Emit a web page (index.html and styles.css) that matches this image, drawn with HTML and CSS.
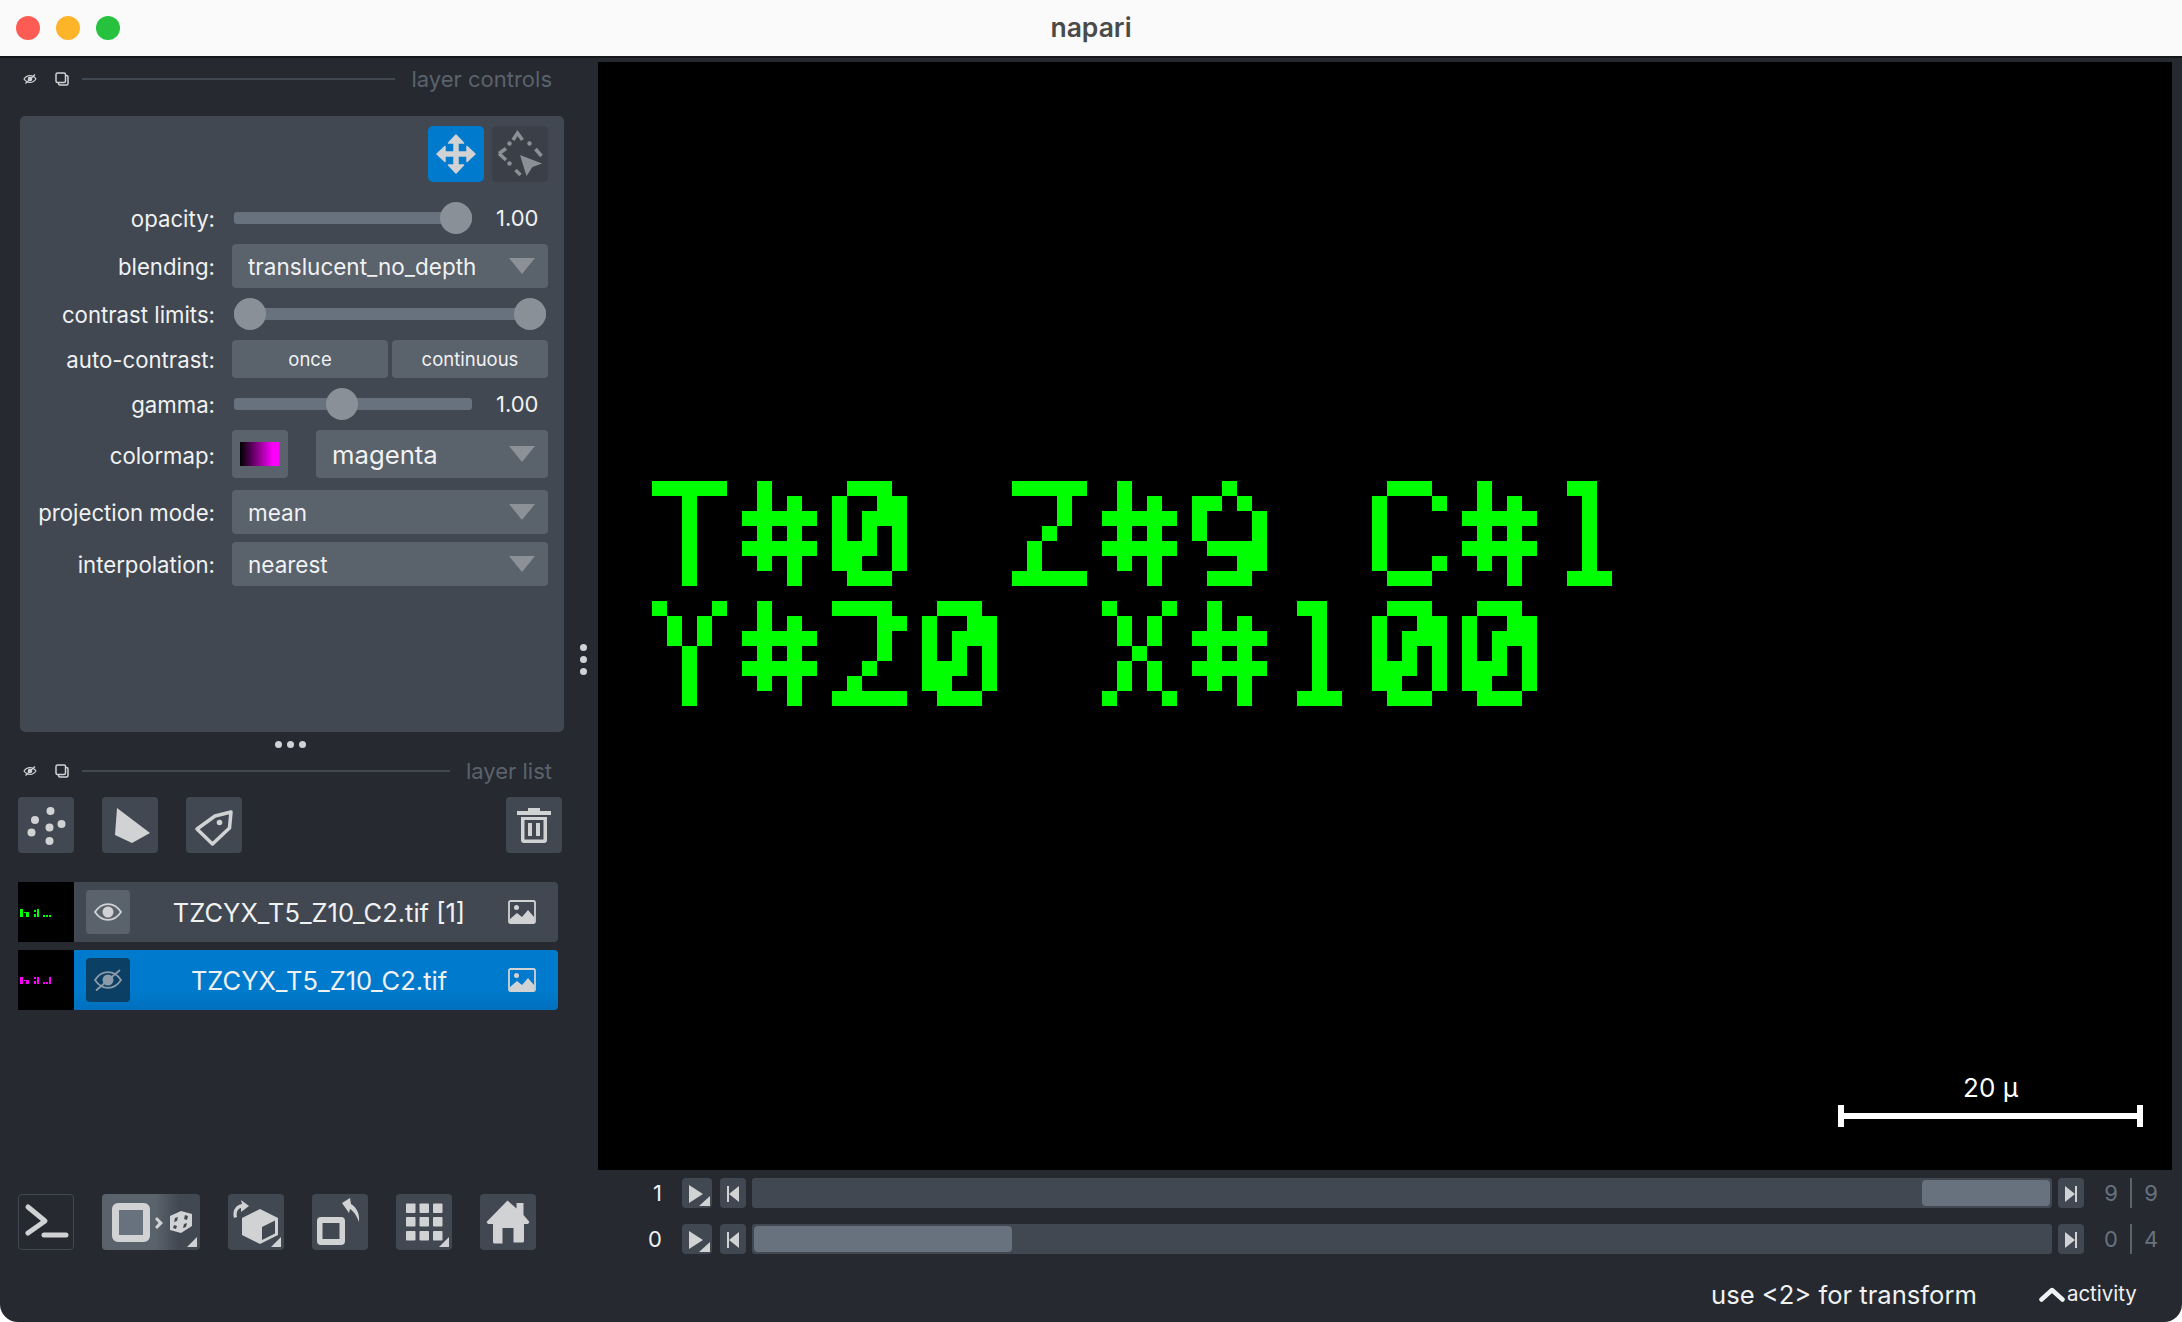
FILE: index.html
```html
<!DOCTYPE html>
<html lang="en">

<head>
    <meta charset="UTF-8">
    <title>napari</title>
    <link rel="stylesheet" href="styles.css">
</head>

<body>
    <svg class="defs" width="0" height="0">
        <filter id="pixelate" x="0" y="0" width="100%" height="100%" color-interpolation-filters="sRGB">
            <feFlood x="7" y="7" width="1" height="1" flood-color="#000"/>
            <feComposite width="15" height="15"/>
            <feTile result="grid"/>
            <feComposite in="SourceGraphic" in2="grid" operator="in"/>
            <feMorphology operator="dilate" radius="7"/>
            <feComponentTransfer>
                <feFuncA type="discrete" tableValues="0 1"/>
            </feComponentTransfer>
        </filter>
        <symbol id="eye-off" viewBox="0 0 14 10">
            <path d="M1 5c3-4.500 9-4.500 12 0-3 4.500-9 4.500-12 0z" fill="none" stroke="#d1d2d4" stroke-width="1.200"/>
            <circle cx="7" cy="5" r="2.300" fill="#d1d2d4"/>
            <path d="M2.500 9.500 12 .5" stroke="#d1d2d4" stroke-width="1.200"/>
        </symbol>
        <symbol id="float" viewBox="0 0 14 14">
            <rect x="3.500" y="3.500" width="9.500" height="9.500" rx="1.500" fill="#262930" stroke="#d1d2d4" stroke-width="1.500"/>
            <rect x="1" y="1" width="9.500" height="9.500" rx="1.500" fill="#262930" stroke="#d1d2d4" stroke-width="1.500"/>
        </symbol>
        <symbol id="arrow" viewBox="0 0 26 16">
            <path d="M0 0h26L13 16z" fill="#8c9198"/>
        </symbol>
        <symbol id="image" viewBox="0 0 28 24">
            <rect x="1" y="1" width="26" height="22" rx="1.500" fill="none" stroke="#d1d2d4" stroke-width="1.800"/>
            <circle cx="8.500" cy="7.500" r="2.500" fill="#d1d2d4"/>
            <path d="M2 23v-4l7-6 5 4 6-7 6 7v6z" fill="#d1d2d4"/>
        </symbol>
        <symbol id="corner" viewBox="0 0 10 10">
            <path d="M10 0v10H0z" fill="#d1d2d4"/>
        </symbol>
    </svg>

    <div class="titlebar">
        <div class="traffic">
            <span class="light red"></span>
            <span class="light yellow"></span>
            <span class="light green"></span>
        </div>
        <div class="title">napari</div>
    </div>

    <div class="window">
        <div class="sidebar">
            <div class="dock-title first">
                <svg class="dock-eye"><use href="#eye-off"/></svg>
                <svg class="dock-float"><use href="#float"/></svg>
                <div class="dock-line"></div>
                <span>layer controls</span>
            </div>

            <div class="controls">
                <div class="mode-buttons">
                    <div class="mode-btn active">
                        <svg width="40" height="40" viewBox="0 0 40 40" fill="#d1d2d4" stroke="#d1d2d4" stroke-width="1.500" stroke-linejoin="round">
                            <path d="M20 1l7.500 8h-5.500v9h9v-5.500l8 7.500-8 7.500V22h-9v9h5.500L20 39l-7.500-8H18v-9H9v5.500L1 20l8-7.500V18h9V9h-5.500z"/>
                        </svg>
                    </div>
                    <div class="mode-btn dark">
                        <svg width="56" height="56" viewBox="0 0 56 56" fill="#8c8f95">
                            <path d="M21 14l4.500-7 5 7M7 27.500l7-5M7 27.500l7 6.500M43.500 23l6 7M23.500 44l5 5" fill="none" stroke="#8c8f95" stroke-width="3.500"/>
                            <circle cx="37.500" cy="17.500" r="2.200"/><circle cx="17.500" cy="17.500" r="2.200"/>
                            <circle cx="17.500" cy="37.500" r="2.200"/>
                            <path d="M28 29l22 8.500-9.500 3.500-6 9z"/>
                        </svg>
                    </div>
                </div>

                <div class="row row-opacity">
                    <label>opacity:</label>
                    <div class="slider">
                        <div class="track"></div>
                        <div class="handle handle-opacity"></div>
                    </div>
                    <div class="value">1.00</div>
                </div>

                <div class="row">
                    <label>blending:</label>
                    <div class="combo">
                        <span class="combo-text clip">translucent_no_depth</span>
                        <svg class="combo-arrow"><use href="#arrow"/></svg>
                    </div>
                </div>

                <div class="row row-slider">
                    <label>contrast limits:</label>
                    <div class="slider wide">
                        <div class="track"></div>
                        <div class="handle handle-min"></div>
                        <div class="handle handle-max"></div>
                    </div>
                </div>

                <div class="row">
                    <label>auto-contrast:</label>
                    <div class="auto-buttons">
                        <div class="auto-btn">once</div>
                        <div class="auto-btn">continuous</div>
                    </div>
                </div>

                <div class="row row-slider">
                    <label>gamma:</label>
                    <div class="slider">
                        <div class="track"></div>
                        <div class="handle handle-gamma"></div>
                    </div>
                    <div class="value">1.00</div>
                </div>

                <div class="row row-colormap">
                    <label>colormap:</label>
                    <div class="swatch-btn"><div class="swatch"></div></div>
                    <div class="combo combo-big">
                        <span class="combo-text">magenta</span>
                        <svg class="combo-arrow"><use href="#arrow"/></svg>
                    </div>
                </div>

                <div class="row row-projection">
                    <label>projection mode:</label>
                    <div class="combo">
                        <span class="combo-text">mean</span>
                        <svg class="combo-arrow"><use href="#arrow"/></svg>
                    </div>
                </div>

                <div class="row row-interp">
                    <label>interpolation:</label>
                    <div class="combo">
                        <span class="combo-text">nearest</span>
                        <svg class="combo-arrow"><use href="#arrow"/></svg>
                    </div>
                </div>
            </div>

            <div class="h-handle"><i></i><i></i><i></i></div>

            <div class="dock-title">
                <svg class="dock-eye"><use href="#eye-off"/></svg>
                <svg class="dock-float"><use href="#float"/></svg>
                <div class="dock-line"></div>
                <span>layer list</span>
            </div>

            <div class="layer-buttons">
                <div class="tool-btn">
                    <svg width="56" height="56" viewBox="0 0 56 56" fill="#d1d2d4">
                        <circle cx="32.500" cy="14" r="4"/><circle cx="17" cy="23" r="4"/>
                        <circle cx="43.500" cy="27" r="4"/><circle cx="31.500" cy="30.500" r="4"/>
                        <circle cx="13.500" cy="35.500" r="4"/><circle cx="31.500" cy="44" r="4"/>
                    </svg>
                </div>
                <div class="tool-btn">
                    <svg width="56" height="56" viewBox="0 0 56 56" fill="#d1d2d4">
                        <path d="M15 11l33 25-18 10-17-8z"/>
                    </svg>
                </div>
                <div class="tool-btn">
                    <svg width="56" height="56" viewBox="0 0 56 56">
                        <path d="M29 19l16-4-1.500 16L26.500 47 11 32z" fill="none" stroke="#d1d2d4" stroke-width="3.500" stroke-linejoin="round"/>
                        <circle cx="33.500" cy="25.500" r="2.800" fill="#d1d2d4"/>
                    </svg>
                </div>
                <div class="tool-btn trash">
                    <svg width="56" height="56" viewBox="0 0 56 56" fill="#d1d2d4">
                        <path d="M22 11h12v3h11v4H11v-4h11z"/>
                        <path d="M15 20h26v23a3 3 0 0 1-3 3H18a3 3 0 0 1-3-3zm3.500 3v19.500h19V23z"/>
                        <rect x="22" y="26" width="4" height="13"/><rect x="30" y="26" width="4" height="13"/>
                    </svg>
                </div>
            </div>

            <div class="layer-list">
                <div class="layer">
                    <svg class="thumb" viewBox="0 0 56 60" fill="#00ff00">
                        <path d="M2 27h3v8H2zM6 30h2v1H6zM8 30h3v5H8zM16 28h2v2h-2zM16 32h2v3h-2zM19 27h2v8h-2zM25 33h2v2h-2zM28 33h2v2h-2zM31 33h2v2h-2z"/>
                    </svg>
                    <div class="layer-body">
                        <div class="eye-box">
                            <svg width="28" height="18" viewBox="0 0 28 18">
                                <path d="M1 9c7-10.500 19-10.500 26 0-7 10.500-19 10.500-26 0z" fill="none" stroke="#d1d2d4" stroke-width="1.800"/>
                                <circle cx="14" cy="9" r="5.500" fill="#d1d2d4"/>
                            </svg>
                        </div>
                        <div class="layer-name">TZCYX_T5_Z10_C2.tif [1]</div>
                        <svg class="layer-icon"><use href="#image"/></svg>
                    </div>
                </div>
                <div class="layer selected">
                    <svg class="thumb" viewBox="0 0 56 60" fill="#ff00ff">
                        <path d="M2 27h3v7H2zM6 30h2v1H6zM8 30h3v4H8zM16 27h2v2h-2zM16 31h2v3h-2zM19 27h2v7h-2zM25 32h2v2h-2zM28 32h2v2h-2zM31 27h2v7h-2z"/>
                    </svg>
                    <div class="layer-body">
                        <div class="eye-box">
                            <svg width="30" height="24" viewBox="0 0 30 24">
                                <path d="M2 12c7-10.500 19-10.500 26 0-7 10.500-19 10.500-26 0z" fill="none" stroke="#8c9ba8" stroke-width="1.800"/>
                                <circle cx="15" cy="12" r="5.500" fill="#8c9ba8"/>
                                <path d="M3 22.500 27 2" stroke="#8c9ba8" stroke-width="1.800"/>
                            </svg>
                        </div>
                        <div class="layer-name">TZCYX_T5_Z10_C2.tif</div>
                        <svg class="layer-icon"><use href="#image"/></svg>
                    </div>
                </div>
            </div>

            <div class="viewer-buttons">
                <div class="view-btn console">
                    <svg width="54" height="54" viewBox="0 0 54 54" fill="none" stroke="#d1d2d4" stroke-width="5" stroke-linecap="round" stroke-linejoin="round">
                        <path d="M9 12l17 14L9 38M25 40h22"/>
                    </svg>
                </div>
                <div class="view-btn ndisplay">
                    <div class="ndisplay-square"></div>
                    <svg class="ndisplay-rest" width="46" height="56" viewBox="0 0 46 56" fill="#d1d2d4">
                        <path d="M5 23l6 6-6 6-2-2 3.500-4L3 25z"/>
                        <path d="M18 22l11-5 11 3v12l-11 7-11-3z"/>
                        <path d="M23 24l3-1-1 4-3 1zM33 21l3 1-1 4-3-1zM22 31l3 1-1 3-3-1zM32 30l3-1-1 4-3 1z" fill="#414851"/>
                    </svg>
                    <svg class="corner"><use href="#corner"/></svg>
                </div>
                <div class="view-btn roll">
                    <svg width="56" height="56" viewBox="0 0 56 56" fill="#d1d2d4">
                        <path d="M6 24c-2-8 2-13 8-14l-1-4 8 6-8 6v-4c-3 .5-5 4-4 9z"/>
                        <path d="M32 15l18 9v17l-18 9-18-9V24z"/>
                        <path d="M34 33l13-6.500v13L34 46z" fill="#414851"/>
                    </svg>
                    <svg class="corner"><use href="#corner"/></svg>
                </div>
                <div class="view-btn transpose">
                    <svg width="56" height="56" viewBox="0 0 56 56" fill="#d1d2d4">
                        <path d="M9 23h20a4 4 0 0 1 4 4v20a4 4 0 0 1-4 4H9a4 4 0 0 1-4-4V27a4 4 0 0 1 4-4zm1.500 6v16h17V29z"/>
                        <path d="M30 9l8-5 1 6c5 3 9 9 8 18-3-8-6-11-9-13l-1 4z"/>
                    </svg>
                </div>
                <div class="view-btn grid">
                    <svg width="56" height="56" viewBox="0 0 56 56" fill="#d1d2d4">
                        <rect x="10" y="9.500" width="9.500" height="9.500" rx=".8"/><rect x="23.500" y="9.500" width="9.500" height="9.500" rx=".8"/><rect x="37" y="9.500" width="9.500" height="9.500" rx=".8"/>
                        <rect x="10" y="23" width="9.500" height="9.500" rx=".8"/><rect x="23.500" y="23" width="9.500" height="9.500" rx=".8"/><rect x="37" y="23" width="9.500" height="9.500" rx=".8"/>
                        <rect x="10" y="37" width="9.500" height="9.500" rx=".8"/><rect x="23.500" y="37" width="9.500" height="9.500" rx=".8"/><rect x="37" y="37" width="9.500" height="9.500" rx=".8"/>
                    </svg>
                    <svg class="corner"><use href="#corner"/></svg>
                </div>
                <div class="view-btn home">
                    <svg width="56" height="56" viewBox="0 0 56 56" fill="#d1d2d4">
                        <path d="M27.500 6.500l9 8V9h7v12l6 7-1.500 2H44v17a1.500 1.500 0 0 1-1.500 1.500H33.500V34h-11v15.500h-8A1.500 1.500 0 0 1 13 48V30H8l-1.500-2z"/>
                    </svg>
                </div>
            </div>
        </div>

        <div class="main">
            <div class="canvas">
                <div class="burnin">
                    <div class="burnin-line"><span>T</span><span class="hash">#</span><span class="inter zero">0</span><span> </span><span class="inter">Z</span><span class="hash">#</span><span class="nine">9</span><span> </span><span class="inter">C</span><span class="hash">#</span><span class="one">1</span></div>
                    <div class="burnin-line"><span class="inter">Y</span><span class="hash">#</span><span>2</span><span class="inter zero">0</span><span> </span><span class="inter">X</span><span class="hash">#</span><span class="one">1</span><span class="inter zero">0</span><span class="inter zero">0</span></div>
                </div>
                <div class="scale-bar">
                    <div class="scale-text">20 µ</div>
                    <div class="scale-line"></div>
                </div>
            </div>

            <div class="dims">
                <div class="dim-row">
                    <div class="dim-label">1</div>
                    <div class="dim-btn play">
                        <svg width="30" height="30" viewBox="0 0 30 30" fill="#d1d2d4"><path d="M7 7l14 9-14 9z"/><path d="M28 18v10H17z"/></svg>
                    </div>
                    <div class="dim-btn step">
                        <svg width="26" height="30" viewBox="0 0 26 30" fill="#d1d2d4"><path d="M7 8h2v16H7zM19 8v16L9 16z"/></svg>
                    </div>
                    <div class="dim-slider"><div class="dim-thumb thumb-end"></div></div>
                    <div class="dim-btn step">
                        <svg width="26" height="30" viewBox="0 0 26 30" fill="#d1d2d4"><path d="M19 8h-2v16h2zM7 8v16l10-8z"/></svg>
                    </div>
                    <div class="dim-num">9</div>
                    <div class="dim-sep"></div>
                    <div class="dim-num">9</div>
                </div>
                <div class="dim-row">
                    <div class="dim-label">0</div>
                    <div class="dim-btn play">
                        <svg width="30" height="30" viewBox="0 0 30 30" fill="#d1d2d4"><path d="M7 7l14 9-14 9z"/><path d="M28 18v10H17z"/></svg>
                    </div>
                    <div class="dim-btn step">
                        <svg width="26" height="30" viewBox="0 0 26 30" fill="#d1d2d4"><path d="M7 8h2v16H7zM19 8v16L9 16z"/></svg>
                    </div>
                    <div class="dim-slider"><div class="dim-thumb thumb-start"></div></div>
                    <div class="dim-btn step">
                        <svg width="26" height="30" viewBox="0 0 26 30" fill="#d1d2d4"><path d="M19 8h-2v16h2zM7 8v16l10-8z"/></svg>
                    </div>
                    <div class="dim-num">0</div>
                    <div class="dim-sep"></div>
                    <div class="dim-num">4</div>
                </div>
            </div>

            <div class="status">
                <span class="status-text">use &lt;2&gt; for transform</span>
                <svg class="status-chevron" width="26" height="15" viewBox="0 0 26 15">
                    <path d="M2.500 12.500 13 3l10.500 9.500" fill="none" stroke="#f0f1f2" stroke-width="4.500" stroke-linecap="round" stroke-linejoin="round"/>
                </svg>
                <span class="status-activity">activity</span>
            </div>
        </div>

        <div class="v-handle"><i></i><i></i><i></i></div>
    </div>
</body>

</html>
```

FILE: styles.css
```css
/* napari window */

* {
    box-sizing: border-box;
}

body {
    margin: 0;
    width: 2182px;
    height: 1322px;
    background: #fff;
    font-family: Inter, "Liberation Sans", sans-serif;
    color: #f0f1f2;
    overflow: hidden;
}

.defs {
    position: absolute;
}

.titlebar {
    height: 58px;
    background: #fafafa;
    border-bottom: 2px solid #15171b;
    display: flex;
    align-items: center;
    justify-content: center;
    position: relative;
}

.traffic {
    position: absolute;
    left: 16px;
    top: 16px;
    display: flex;
    gap: 16px;
}

.light {
    width: 24px;
    height: 24px;
    border-radius: 50%;
}

.red { background: #fd5c55; }
.yellow { background: #fdb428; }
.green { background: #27c23d; }

.title {
    font-size: 26.500px;
    font-weight: 600;
    color: #4a4a4a;
    margin-top: -2px;
}

.window {
    height: 1264px;
    display: flex;
    background: #262930;
    border-radius: 0 0 18px 18px;
    position: relative;
    overflow: hidden;
}

/* left column */

.sidebar {
    width: 598px;
    flex: none;
    display: flex;
    flex-direction: column;
}

.dock-title {
    display: flex;
    align-items: center;
    height: 18px;
    margin-top: 6px;
    padding-left: 23px;
    font-size: 22px;
    color: #5a626c;
}

.dock-title.first {
    margin-top: 12px;
}

.dock-eye {
    width: 14px;
    height: 10px;
    margin-right: 18px;
}

.dock-float {
    width: 14px;
    height: 14px;
    margin-right: 13px;
}

.dock-line {
    flex: 1;
    height: 2px;
    background: #414851;
    margin-right: 16px;
}

.dock-title span {
    margin-right: 46px;
}

.controls {
    margin: 28px 0 0 20px;
    width: 544px;
    height: 616px;
    background: #414851;
    border-radius: 5px;
    padding: 10px 16px 0 0;
}

.mode-buttons {
    display: flex;
    justify-content: flex-end;
    gap: 8px;
}

.mode-btn {
    width: 56px;
    height: 56px;
    border-radius: 5px;
    display: flex;
    align-items: center;
    justify-content: center;
}

.mode-btn.active { background: #007acc; }
.mode-btn.dark { background: #3b3f48; }

.row {
    display: flex;
    align-items: center;
    margin-top: 10px;
}

.row-opacity { margin-top: 20px; }
.row-projection { margin-top: 12px; }
.row-interp { margin-top: 8px; }
.row-colormap label { padding-top: 2px; }

.row label {
    width: 195px;
    text-align: right;
    margin-right: 17px;
    font-size: 22.200px;
    flex: none;
    white-space: nowrap;
}

.slider {
    position: relative;
    width: 238px;
    height: 32px;
    margin-left: 2px;
}

.slider.wide {
    width: 312px;
}

.track {
    position: absolute;
    left: 0;
    right: 0;
    top: 10px;
    height: 12px;
    border-radius: 3px;
    background: #68727e;
}

.handle {
    position: absolute;
    top: 0;
    width: 32px;
    height: 32px;
    border-radius: 50%;
    background: #8a9098;
}

.handle-opacity { left: 206px; }
.handle-min { left: 0; }
.handle-max { left: 280px; }
.handle-gamma { left: 92px; }

.value {
    margin-left: 24px;
    font-size: 22px;
}

.combo {
    width: 316px;
    height: 44px;
    background: #5a626c;
    border-radius: 4px;
    position: relative;
    display: flex;
    align-items: center;
    padding-left: 16px;
    font-size: 22.500px;
}

.combo-big {
    width: 232px;
    height: 48px;
    margin-left: 28px;
    padding: 0 0 0 16px;
    font-size: 25.700px;
}

.combo-text.clip {
    width: 228px;
    overflow: hidden;
    white-space: nowrap;
}

.combo-arrow {
    position: absolute;
    right: 13px;
    top: 14px;
    width: 26px;
    height: 16px;
}

.combo-big .combo-arrow {
    top: 16px;
}

.auto-buttons {
    display: flex;
    gap: 4px;
}

.auto-btn {
    width: 156px;
    height: 38px;
    background: #5a626c;
    border-radius: 4px;
    display: flex;
    align-items: center;
    justify-content: center;
    font-size: 18.500px;
}

.swatch-btn {
    width: 56px;
    height: 48px;
    background: #5a626c;
    border-radius: 4px;
    padding: 12px 9px 12px 8px;
}

.swatch {
    height: 100%;
    background: linear-gradient(to right, #000, #ff00ff 85%);
}

.h-handle {
    display: flex;
    justify-content: center;
    gap: 5px;
    width: 580px;
    height: 24px;
    align-items: center;
}

.h-handle i,
.v-handle i {
    display: block;
    width: 7px;
    height: 7px;
    border-radius: 50%;
    background: #d1d2d4;
}

.v-handle {
    position: absolute;
    left: 580px;
    top: 586px;
    display: flex;
    flex-direction: column;
    gap: 5px;
}

.layer-buttons {
    display: flex;
    gap: 28px;
    margin: 17px 0 0 18px;
    width: 544px;
}

.tool-btn {
    width: 56px;
    height: 56px;
    background: #414851;
    border-radius: 4px;
}

.tool-btn.trash {
    margin-left: auto;
}

.layer-list {
    margin: 29px 0 0 18px;
    width: 540px;
    display: flex;
    flex-direction: column;
    gap: 8px;
}

.layer {
    display: flex;
    height: 60px;
}

.thumb {
    width: 56px;
    height: 60px;
    background: #000;
    flex: none;
}

.layer-body {
    flex: 1;
    display: flex;
    align-items: center;
    background: #414851;
    border-radius: 0 4px 4px 0;
    padding: 0 22px 0 12px;
}

.selected .layer-body {
    background: linear-gradient(to bottom, #007acc 70%, #006fbd);
}

.eye-box {
    width: 44px;
    height: 44px;
    background: #5a626c;
    border-radius: 4px;
    display: flex;
    align-items: center;
    justify-content: center;
    flex: none;
}

.selected .eye-box {
    background: #0b3f63;
}

.layer-name {
    flex: 1;
    text-align: center;
    font-size: 25.500px;
    white-space: nowrap;
}

.layer-icon {
    width: 28px;
    height: 24px;
    flex: none;
}

.viewer-buttons {
    display: flex;
    gap: 28px;
    margin: 184px 0 0 18px;
}

.view-btn {
    width: 56px;
    height: 56px;
    border-radius: 4px;
    background: #414851;
    position: relative;
    flex: none;
}

.view-btn.console {
    background: #262930;
    border: 1px solid #414851;
}

.view-btn.ndisplay {
    width: 98px;
    background: linear-gradient(to right, #5a626c 55%, #414851 78%);
    display: flex;
    align-items: center;
    padding-left: 10px;
}

.ndisplay-square {
    width: 38px;
    height: 39px;
    background: #68727e;
    border: 7px solid #d1d2d4;
    border-radius: 6px;
    flex: none;
}

.ndisplay-rest {
    margin-left: 2px;
    flex: none;
}

.corner {
    position: absolute;
    right: 3px;
    bottom: 3px;
    width: 10px;
    height: 10px;
}

/* right column */

.main {
    flex: 1;
    display: flex;
    flex-direction: column;
    padding: 4px 10px 0 0;
    min-width: 0;
}

.canvas {
    height: 1108px;
    background: #000;
    position: relative;
    padding: 419px 0 0 54px;
}

.burnin {
    width: 990px;
    height: 225px;
    filter: url(#pixelate);
}

.burnin-line {
    display: flex;
    height: 120px;
    font-family: "DejaVu Sans Mono", monospace;
    font-size: 144px;
    line-height: 105px;
    color: #00ff00;
    -webkit-text-stroke: 2px #00ff00;
}

.burnin-line span {
    width: 90px;
    padding-right: 15px;
    text-align: center;
    white-space: pre;
    display: flex;
    justify-content: center;
    transform-origin: 37.500px 52.500px;
}

.burnin-line .inter {
    font-family: Inter, sans-serif;
    transform: scaleX(.86);
}

.burnin-line .zero {
    font-feature-settings: "zero";
    -webkit-text-stroke-width: 5px;
    transform: scaleX(1.12);
}

.burnin-line .hash {
    font-family: Inter, sans-serif;
    transform: scale(.86, 1.16);
}

.burnin-line .nine {
    font-family: "Liberation Mono", monospace;
    -webkit-text-stroke-width: 3px;
    transform: translateY(15px);
}

.burnin-line .one {
    transform: scaleX(.65);
}

.scale-bar {
    position: absolute;
    left: 1240px;
    top: 1009px;
    width: 305px;
}

.scale-text {
    text-align: center;
    font-size: 26px;
    line-height: 34px;
    color: #fff;
}

.scale-line {
    height: 22px;
    border-left: 6px solid #fff;
    border-right: 6px solid #fff;
    background: linear-gradient(#fff, #fff) center / 100% 6px no-repeat;
}

.dims {
    display: flex;
    flex-direction: column;
    gap: 16px;
    padding-top: 8px;
}

.dim-row {
    display: flex;
    align-items: center;
    height: 30px;
    padding-right: 14px;
}

.dim-label {
    width: 64px;
    text-align: right;
    font-size: 22px;
    margin-right: 20px;
}

.dim-btn {
    background: #414851;
    border-radius: 4px;
    height: 30px;
    flex: none;
}

.dim-btn.play {
    width: 30px;
    margin-right: 8px;
}

.dim-btn.step {
    width: 26px;
}

.dim-slider {
    flex: 1;
    height: 30px;
    background: #414851;
    border-radius: 3px;
    margin: 0 6px;
    position: relative;
}

.dim-thumb {
    position: absolute;
    top: 2px;
    height: 26px;
    background: #68727e;
    border-radius: 4px;
}

.thumb-end {
    left: 1170px;
    width: 128px;
}

.thumb-start {
    left: 2px;
    width: 258px;
}

.dim-num {
    width: 14px;
    margin-left: 20px;
    text-align: center;
    font-size: 22px;
    color: #68727e;
}

.dim-sep {
    width: 2px;
    height: 30px;
    background: #5a626c;
    margin-left: 12px;
    margin-right: -8px;
}

.status {
    display: flex;
    align-items: center;
    padding: 25px 0 0 1113px;
}

.status-text {
    font-size: 25.600px;
    white-space: nowrap;
}

.status-chevron {
    margin-left: 62px;
}

.status-activity {
    font-size: 20.500px;
    margin-left: 2px;
    margin-top: -2px;
}
```
